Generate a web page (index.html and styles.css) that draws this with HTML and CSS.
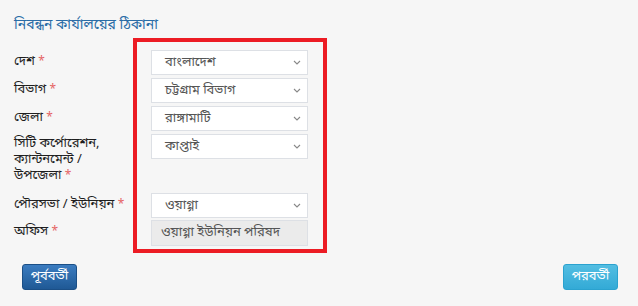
FILE: index.html
```html
<!doctype html>
<html lang="bn">
<head>
<title>নিবন্ধন কার্যালয়ের ঠিকানা</title>
<meta http-equiv="Content-Type" content="text/html; charset=utf-8">
<link rel="stylesheet" href="styles.css">
</head>
<body>

<h4 class="title">নিবন্ধন কার্যালয়ের ঠিকানা</h4>

<div class="form">
  <div class="frame"></div>

  <label class="lbl r1">দেশ <i>*</i></label>
  <div class="field r1"><span>বাংলাদেশ</span><svg width="8" height="5" viewBox="0 0 8 5"><path d="M1 1l3 3 3-3" fill="none" stroke="#888" stroke-width="1.1"/></svg></div>

  <label class="lbl r2">বিভাগ <i>*</i></label>
  <div class="field r2"><span>চট্টগ্রাম বিভাগ</span><svg width="8" height="5" viewBox="0 0 8 5"><path d="M1 1l3 3 3-3" fill="none" stroke="#888" stroke-width="1.1"/></svg></div>

  <label class="lbl r3">জেলা <i>*</i></label>
  <div class="field r3"><span>রাঙ্গামাটি</span><svg width="8" height="5" viewBox="0 0 8 5"><path d="M1 1l3 3 3-3" fill="none" stroke="#888" stroke-width="1.1"/></svg></div>

  <label class="lbl r4">সিটি কর্পোরেশন,<br>ক্যান্টনমেন্ট /<br>উপজেলা <i>*</i></label>
  <div class="field r4"><span>কাপ্তাই</span><svg width="8" height="5" viewBox="0 0 8 5"><path d="M1 1l3 3 3-3" fill="none" stroke="#888" stroke-width="1.1"/></svg></div>

  <label class="lbl r5">পৌরসভা / ইউনিয়ন <i>*</i></label>
  <div class="field r5"><span>ওয়াগ্গা</span><svg width="8" height="5" viewBox="0 0 8 5"><path d="M1 1l3 3 3-3" fill="none" stroke="#888" stroke-width="1.1"/></svg></div>

  <label class="lbl r6">অফিস <i>*</i></label>
  <div class="field r6 ro"><span>ওয়াগ্গা ইউনিয়ন পরিষদ</span></div>
</div>

<div class="actions">
  <button class="btn prev">পূর্ববর্তী</button>
  <button class="btn next">পরবর্তী</button>
</div>

</body>
</html>
```

FILE: styles.css
```css
BODY {
  margin: 0;
  padding: 0 20px 0 14px;
  background: #f6f6f6;
  color: #222;
  font: 13px/16px "Noto Sans Bengali", "Noto Sans", "Liberation Sans", sans-serif;
}
.title {
  margin: 0;
  padding: 18px 0 0 0;
  height: 20px;
  font-weight: normal;
  font-size: 14px;
  color: #2a6ca6;
}
.form {
  display: grid;
  grid-template-columns: 119px 194px;
  grid-template-rows: 12px 28px 28px 28px 59px 27px 26px 7px;
}
.frame {
  grid-column: 2;
  grid-row: 1 / -1;
  border: 4px solid #ec1c24;
}
.lbl {
  grid-column: 1;
  padding-top: 4px;
  color: #1e1e1e;
}
.lbl I {
  font-style: normal;
  font-size: 12px;
  color: #e56464;
}
.r1 { grid-row: 2; }
.r2 { grid-row: 3; }
.r3 { grid-row: 4; }
.r4 { grid-row: 5; }
.r5 { grid-row: 6; }
.r6 { grid-row: 7; }
.lbl.r4 { padding-top: 2px; }
.field {
  grid-column: 2;
  align-self: start;
  height: 25px;
  margin: 0 19px 0 18px;
  box-sizing: border-box;
  border: 1px solid #dde0e5;
  background: #fff;
  color: #555;
  display: flex;
  align-items: center;
  justify-content: space-between;
  padding: 0 6px 0 13px;
}
.field.ro {
  height: 26px;
  background: #ebebeb;
  padding-left: 9px;
}
.actions {
  display: flex;
  justify-content: space-between;
  padding: 11px 0 0 8px;
}
.btn {
  width: 55px;
  height: 26px;
  padding: 0;
  border-radius: 3px;
  color: #fff;
  font: 13px/16px "Noto Sans Bengali", "Noto Sans", "Liberation Sans", sans-serif;
}
.prev {
  border: 1px solid #1b4f86;
  background: linear-gradient(#3b7cc0, #1f5995);
}
.next {
  border: 1px solid #2ba2cf;
  background: linear-gradient(#53bee2, #33aad6);
}
```
